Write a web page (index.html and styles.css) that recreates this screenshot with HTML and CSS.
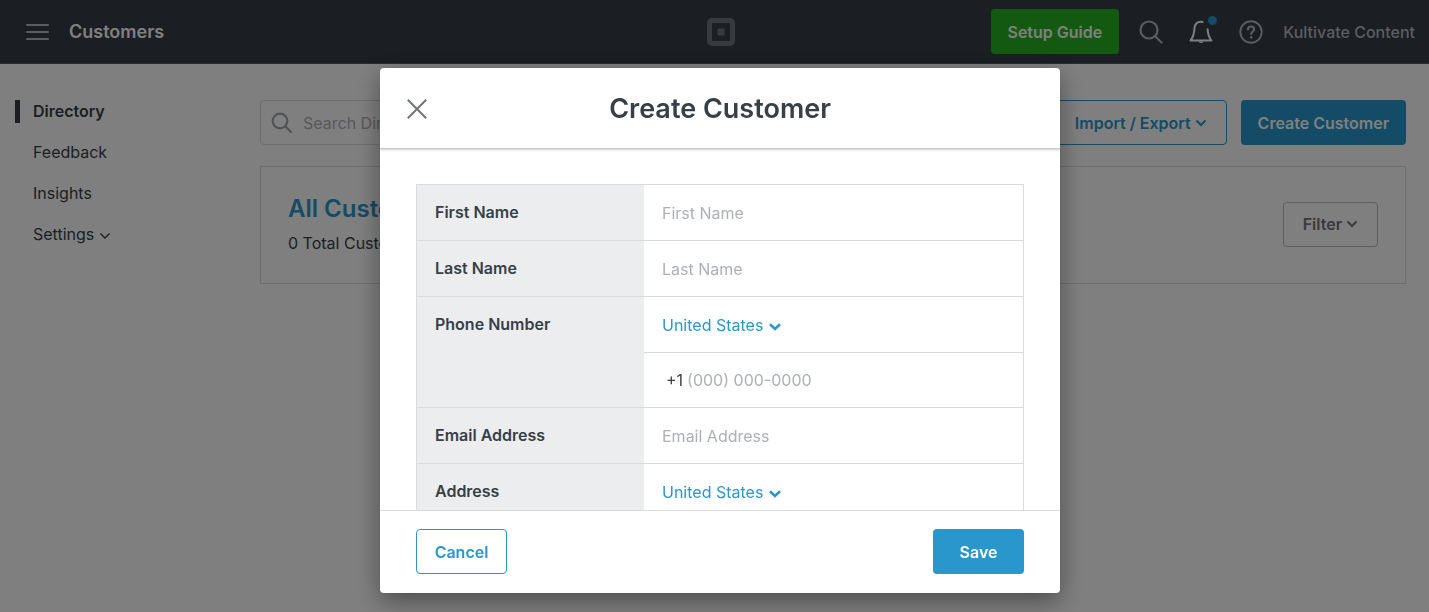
FILE: index.html
```html
<!DOCTYPE html>
<html lang="en">
<head>
    <meta charset="UTF-8">
    <meta name="viewport" content="width=device-width, initial-scale=1.0">
    <title>Customers</title>
    <link rel="stylesheet" href="styles.css">
</head>
<body>
    <header class="topbar">
        <div class="topbar-left">
            <button type="button" class="icon-btn" aria-label="Menu">
                <svg width="23" height="18" viewBox="0 0 23 18" fill="none" stroke="currentColor" stroke-width="2" stroke-linecap="round">
                    <path d="M1 2h21M1 9h21M1 16h21"/>
                </svg>
            </button>
            <span class="topbar-title">Customers</span>
        </div>

        <svg class="logo" width="28" height="28" viewBox="0 0 28 28" fill="none">
            <rect x="2.5" y="2.5" width="23" height="23" rx="2.5" stroke="currentColor" stroke-width="5"/>
            <rect x="10.5" y="10.5" width="7" height="7" rx="1" fill="currentColor"/>
        </svg>

        <div class="topbar-right">
            <button type="button" class="btn btn-green">Setup Guide</button>
            <button type="button" class="icon-btn" aria-label="Search">
                <svg width="24" height="24" viewBox="0 0 24 24" fill="none" stroke="currentColor" stroke-width="2.2" stroke-linecap="round">
                    <circle cx="10" cy="10" r="8.5"/>
                    <path d="M16.2 16.2L22.5 22.5"/>
                </svg>
            </button>
            <button type="button" class="icon-btn bell" aria-label="Notifications">
                <svg width="24" height="24" viewBox="0 0 24 24" fill="none" stroke="currentColor" stroke-width="2" stroke-linecap="round" stroke-linejoin="round">
                    <path d="M13.6 1.9C8.2 1 5.6 4 5.4 8.6C5.2 13 4.6 16.5 1.5 20.5H22.5C19.6 16.8 18.8 13.4 18.6 9.2"/>
                    <path d="M9.5 21.5a2.6 2.2 0 0 0 5 0z" fill="currentColor" stroke="none"/>
                </svg>
                <span class="dot"></span>
            </button>
            <button type="button" class="icon-btn" aria-label="Help">
                <svg width="24" height="24" viewBox="0 0 24 24" fill="none" stroke="currentColor" stroke-width="2.2" stroke-linecap="round" stroke-linejoin="round">
                    <circle cx="12" cy="12" r="10.7" stroke-width="1.9"/>
                    <path d="M8.9 9.4C9.1 7.4 10.4 6.5 12 6.5C13.8 6.5 15.1 7.6 15.1 9.2C15.1 11.4 12.2 11.6 12.2 14"/>
                    <path d="M12.2 17.3v.1" stroke-width="2.4"/>
                </svg>
            </button>
            <a href="#" class="account">Kultivate Content</a>
        </div>
    </header>

    <div class="page">
        <nav class="sidebar">
            <a href="#" class="active">Directory</a>
            <a href="#">Feedback</a>
            <a href="#">Insights</a>
            <a href="#">Settings
                <svg width="12" height="11" viewBox="0 0 12 11" fill="none" stroke="currentColor" stroke-width="1.4"><path d="M1.5 4.5L6 9l4.5-4.5"/></svg>
            </a>
        </nav>

        <main class="content">
            <div class="toolbar">
                <div class="search">
                    <svg width="22" height="22" viewBox="0 0 22 22" fill="none" stroke="currentColor" stroke-width="2.2" stroke-linecap="round">
                        <circle cx="9" cy="9" r="7.3"/>
                        <path d="M14.3 14.3L20 20"/>
                    </svg>
                    <input type="text" placeholder="Search Directory" aria-label="Search Directory">
                </div>
                <button type="button" class="btn btn-outline">Import / Export
                    <svg width="12" height="8" viewBox="0 0 12 8" fill="none" stroke="currentColor" stroke-width="2"><path d="M1.5 1.5L6 6l4.5-4.5"/></svg>
                </button>
                <button type="button" class="btn btn-blue">Create Customer</button>
            </div>

            <section class="card">
                <div>
                    <h2>All Customers</h2>
                    <p>0 Total Customers</p>
                </div>
                <button type="button" class="btn btn-gray">Filter
                    <svg width="12" height="8" viewBox="0 0 12 8" fill="none" stroke="currentColor" stroke-width="2"><path d="M1.5 1.5L6 6l4.5-4.5"/></svg>
                </button>
            </section>
        </main>
    </div>

    <div class="overlay">
        <form class="modal" role="dialog" aria-labelledby="modalTitle">
            <div class="modal-header">
                <button type="button" class="icon-btn close" aria-label="Close">
                    <svg width="20" height="20" viewBox="0 0 20 20" fill="none" stroke="currentColor" stroke-width="2"><path d="M.8 .8l18.4 18.4M19.2 .8L.8 19.2"/></svg>
                </button>
                <h1 id="modalTitle">Create Customer</h1>
            </div>

            <div class="modal-body">
                <div class="fields">
                    <div class="row">
                        <label for="firstName">First Name</label>
                        <div class="field"><input type="text" id="firstName" placeholder="First Name"></div>
                    </div>
                    <div class="row">
                        <label for="lastName">Last Name</label>
                        <div class="field"><input type="text" id="lastName" placeholder="Last Name"></div>
                    </div>
                    <div class="row">
                        <label for="phone">Phone Number</label>
                        <div class="stack">
                            <div class="field">
                                <select aria-label="Phone country"><option>United States</option></select>
                                <svg width="12" height="8" viewBox="0 0 12 8" fill="none" stroke="currentColor" stroke-width="2.6"><path d="M1 1.3L6 6l5-4.7"/></svg>
                            </div>
                            <div class="field phone">
                                <span class="prefix">+1</span>
                                <input type="tel" id="phone" placeholder="(000) 000-0000">
                            </div>
                        </div>
                    </div>
                    <div class="row">
                        <label for="email">Email Address</label>
                        <div class="field"><input type="email" id="email" placeholder="Email Address"></div>
                    </div>
                    <div class="row">
                        <label for="country">Address</label>
                        <div class="field">
                            <select id="country"><option>United States</option></select>
                            <svg width="12" height="8" viewBox="0 0 12 8" fill="none" stroke="currentColor" stroke-width="2.6"><path d="M1 1.3L6 6l5-4.7"/></svg>
                        </div>
                    </div>
                </div>
            </div>

            <div class="modal-footer">
                <button type="button" class="btn btn-outline">Cancel</button>
                <button type="submit" class="btn btn-blue">Save</button>
            </div>
        </form>
    </div>
</body>
</html>
```

FILE: styles.css
```css
* {
    box-sizing: border-box;
}

body {
    margin: 0;
    font-family: Inter, "Liberation Sans", sans-serif;
    font-size: 16px;
    line-height: 24px;
    color: #373f47;
    background-color: #fff;
}

a {
    color: inherit;
    text-decoration: none;
}

button, input, select {
    font: inherit;
    color: inherit;
}

h1, h2, p {
    margin: 0;
}

svg {
    display: block;
    flex: none;
}

/* Top bar */
.topbar {
    display: grid;
    grid-template-columns: minmax(0, 1fr) auto minmax(0, 1fr);
    align-items: center;
    height: 64px;
    padding: 0 14px 0 26px;
    background-color: #363c46;
    border-bottom: 1px solid #545b63;
    color: #b6babd;
}

.topbar-left, .topbar-right {
    display: flex;
    align-items: center;
    gap: 20px;
}

.topbar-right {
    justify-content: flex-end;
    white-space: nowrap;
}

.topbar-title {
    font-size: 18px;
    font-weight: 600;
    color: #fff;
}

.logo {
    color: #70757a;
}

.icon-btn {
    display: flex;
    padding: 0;
    border: none;
    background: none;
    cursor: pointer;
}

.topbar-right .icon-btn {
    margin-right: 6px;
}

.topbar-right .icon-btn:nth-last-child(2) {
    margin-right: 0;
}

.bell {
    position: relative;
    color: #fff;
}

.dot {
    position: absolute;
    top: -4px;
    right: -4px;
    width: 9px;
    height: 9px;
    border-radius: 50%;
    background-color: #2996cc;
}

.account {
    font-weight: 500;
}

/* Buttons */
.btn {
    display: flex;
    flex: none;
    align-items: center;
    justify-content: center;
    gap: 4px;
    height: 45px;
    padding: 0 16px;
    border: 1px solid transparent;
    border-radius: 4px;
    font-weight: 600;
    cursor: pointer;
}

.btn-green {
    background-color: #28b322;
    color: #fff;
}

.btn-blue {
    background-color: #2996cc;
    color: #fff;
}

.btn-outline {
    background-color: #fff;
    border-color: #2996cc;
    color: #2996cc;
}

.btn-gray {
    padding: 0 19px;
    background-color: #fff;
    border-color: #b6babd;
    color: #70757a;
}

/* Page */
.page {
    display: grid;
    grid-template-columns: 260px minmax(0, 1fr);
    padding: 36px 23px 36px 0;
}

.sidebar {
    display: flex;
    flex-direction: column;
    gap: 18px;
    padding-left: 15px;
    line-height: 23px;
}

.sidebar a {
    display: flex;
    align-items: center;
    gap: 5px;
    padding-left: 13px;
    border-left: 5px solid transparent;
}

.sidebar .active {
    border-left-color: #363c46;
    font-weight: 600;
}

.toolbar {
    display: flex;
    gap: 14px;
    margin-bottom: 21px;
}

.toolbar .btn-outline {
    padding: 0 19px;
}

.search {
    display: flex;
    flex: 1;
    align-items: center;
    gap: 10px;
    padding: 0 10px;
    border: 1px solid #d8dcdf;
    border-radius: 4px;
    color: #a3a8ad;
}

.card {
    display: flex;
    align-items: center;
    justify-content: space-between;
    padding: 26px 27px 28px;
    border: 1px solid #d8dcdf;
}

.card h2 {
    margin-bottom: 6px;
    font-size: 24px;
    font-weight: 600;
    line-height: 32px;
    color: #2996cc;
}

/* Create customer modal */
.overlay {
    position: fixed;
    inset: 0;
    display: flex;
    justify-content: center;
    align-items: flex-start;
    padding: 68px 0 19px 11px;
    background-color: rgba(0, 0, 0, 0.5);
}

.modal {
    display: flex;
    flex-direction: column;
    width: 100%;
    max-width: 680px;
    max-height: 100%;
    border-radius: 4px;
    background-color: #fff;
    box-shadow: 0 8px 24px rgba(0, 0, 0, 0.4);
    overflow: hidden;
}

.modal-header {
    display: grid;
    grid-template-columns: 20px 1fr 20px;
    align-items: center;
    flex: none;
    z-index: 1;
    padding: 21px 27px 19px;
    border-bottom: 1px solid #c8ccce;
    box-shadow: 0 1px 2px rgba(0, 0, 0, 0.2);
}

.modal-header h1 {
    font-size: 27px;
    font-weight: 600;
    line-height: 40px;
    text-align: center;
}

.close {
    color: #70757a;
}

.modal-body {
    padding: 35px 36px;
    overflow: auto;
    scrollbar-width: none;
}

.fields {
    border: 1px solid #d8dcdf;
}

.row {
    display: grid;
    grid-template-columns: 227px minmax(0, 1fr);
    border-bottom: 1px solid #d8dcdf;
}

.row:last-child {
    border-bottom: none;
}

.row label {
    padding: 15px 18px;
    background-color: #ebedee;
    font-weight: 600;
}

.field {
    display: flex;
    align-items: center;
    gap: 5px;
    height: 55px;
    padding: 0 18px;
    color: #2996cc;
}

.field svg {
    margin-top: 4px;
}

.field.phone {
    gap: 4px;
    padding-left: 22px;
    border-top: 1px solid #d8dcdf;
}

.prefix, .field input {
    color: #373f47;
}

input {
    flex: 1;
    min-width: 0;
    padding: 0;
    border: none;
    outline: none;
    background: none;
}

input::placeholder {
    color: #adb1b4;
    opacity: 1;
}

select {
    padding: 0;
    border: none;
    outline: none;
    background: none;
    appearance: none;
    cursor: pointer;
}

.modal-footer {
    display: flex;
    flex: none;
    justify-content: space-between;
    padding: 18px 36px 19px;
    border-top: 1px solid #d8dcdf;
}

.modal-footer .btn {
    min-width: 91px;
}
```
